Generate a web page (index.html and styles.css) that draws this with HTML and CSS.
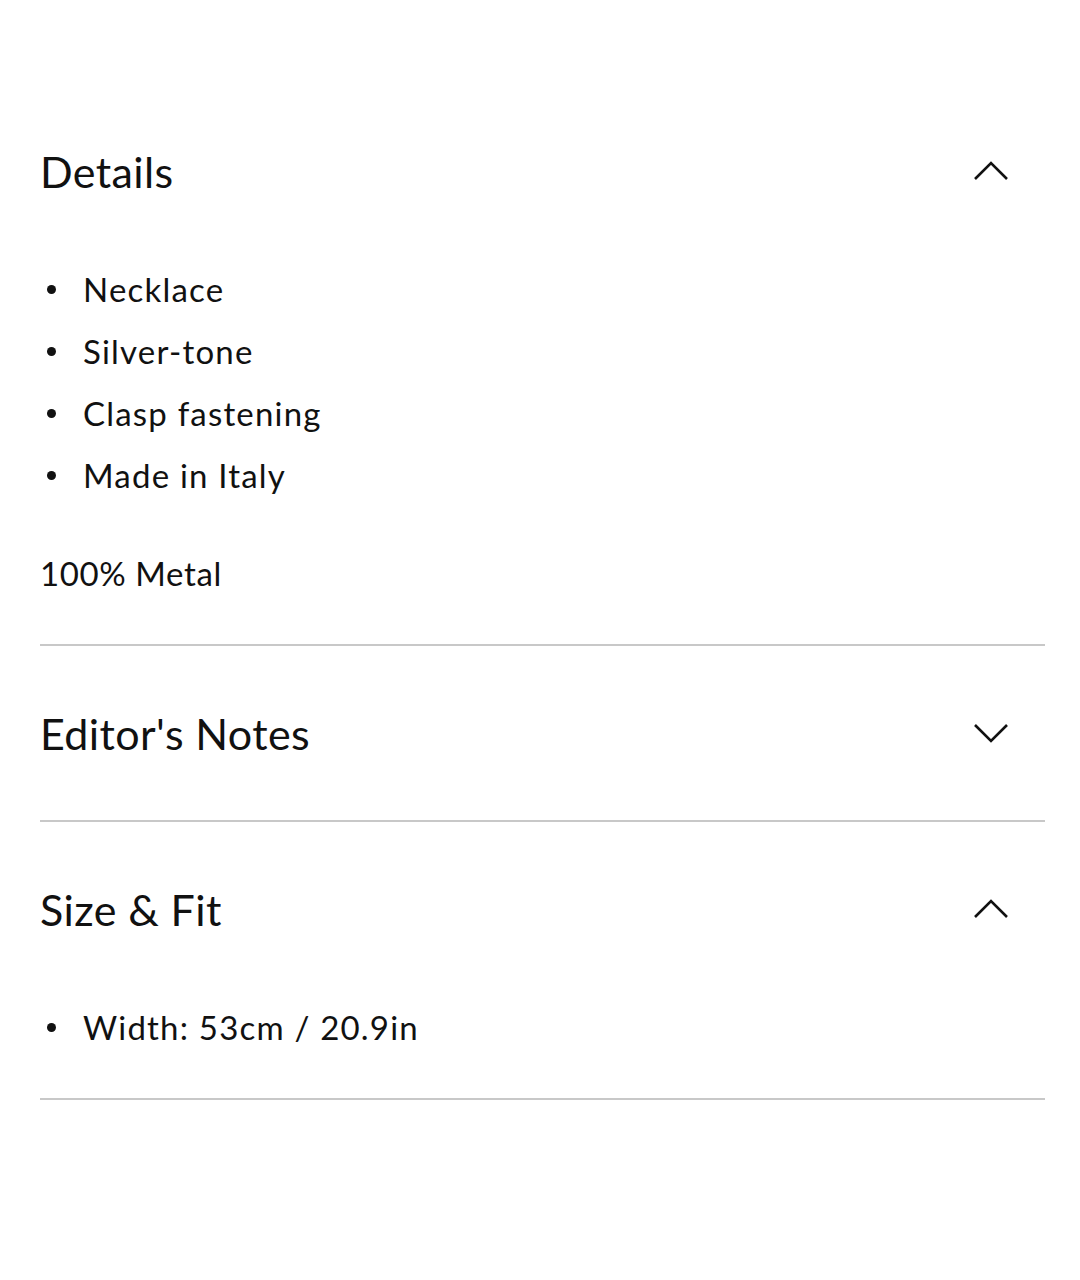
FILE: index.html
```html
<!DOCTYPE html>
<html lang="en">
<head>
	<meta charset="UTF-8">
	<title>Product information</title>
	<link rel="stylesheet" href="styles.css">
</head>
<body>
	<div class="accordion">
		<div class="panel">
			<div class="panel-head">
				<h2>Details</h2>
				<svg class="chev" viewBox="0 0 36 20"><path d="M2 18 L18 2 L34 18"/></svg>
			</div>
			<div class="panel-body">
				<ul class="dots">
					<li>Necklace</li>
					<li>Silver-tone</li>
					<li>Clasp fastening</li>
					<li>Made in Italy</li>
				</ul>
				<p class="note">100% Metal</p>
			</div>
		</div>
		<div class="panel">
			<div class="panel-head">
				<h2>Editor's Notes</h2>
				<svg class="chev" viewBox="0 0 36 20"><path d="M2 2 L18 18 L34 2"/></svg>
			</div>
		</div>
		<div class="panel">
			<div class="panel-head">
				<h2>Size &amp; Fit</h2>
				<svg class="chev" viewBox="0 0 36 20"><path d="M2 18 L18 2 L34 18"/></svg>
			</div>
			<div class="panel-body">
				<ul class="dots">
					<li>Width: 53cm / 20.9in</li>
				</ul>
			</div>
		</div>
	</div>
</body>
</html>
```

FILE: styles.css
```css
body{margin:0;background:#fff;color:#111;font-family:Lato,"Open Sans",sans-serif;}
ul{list-style:none;padding:0;margin:0;}
.accordion{padding:84px 35px 0 40px;}
.panel{border-bottom:2px solid #c8c8c8;}
.panel-head{display:flex;align-items:center;justify-content:space-between;height:174px;}
.panel-head h2{margin:0;font-size:43px;font-weight:400;letter-spacing:0.4px;}
.chev{width:36px;height:20px;margin-right:36px;fill:none;stroke:#111;stroke-width:2.6;}
.panel-body{padding-bottom:40px;}
.dots li{position:relative;padding-left:43px;font-size:33px;letter-spacing:1.2px;line-height:62px;}
.dots li::before{content:"";position:absolute;left:7px;top:27px;width:9px;height:9px;border-radius:50%;background:#111;}
.note{margin:36px 0 0;font-size:33px;letter-spacing:0.6px;line-height:62px;}
```
